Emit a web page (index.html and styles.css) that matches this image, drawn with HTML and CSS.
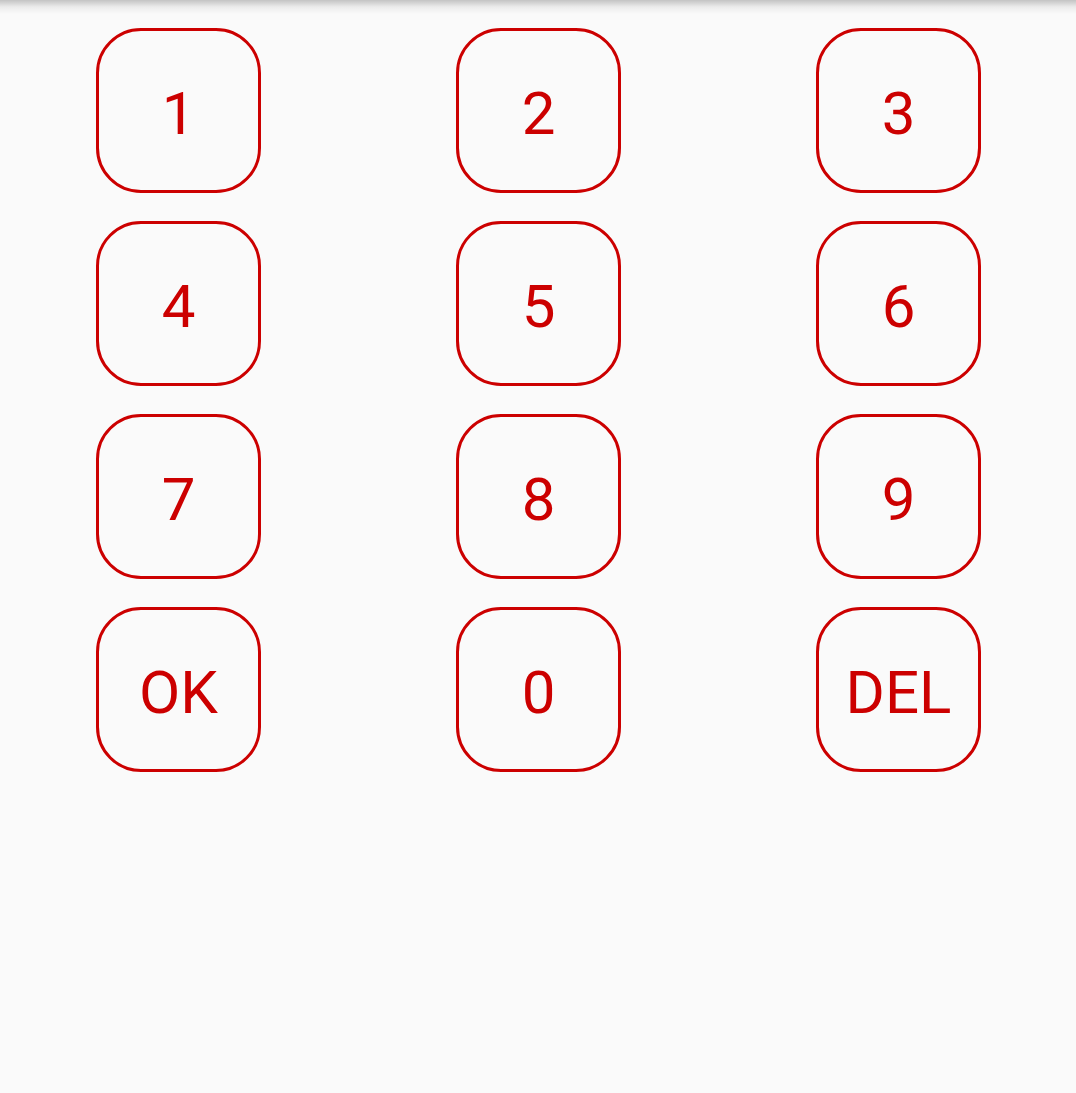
FILE: index.html
```html
<!DOCTYPE html>
<html>
<head>
<meta charset="utf-8">
<link rel="stylesheet" href="styles.css">
</head>
<body>
<div class="topshadow"></div>
<div class="pad">
  <button class="key">1</button>
  <button class="key">2</button>
  <button class="key">3</button>
  <button class="key">4</button>
  <button class="key">5</button>
  <button class="key">6</button>
  <button class="key">7</button>
  <button class="key">8</button>
  <button class="key">9</button>
  <button class="key">OK</button>
  <button class="key">0</button>
  <button class="key">DEL</button>
</div>
</body>
</html>
```
FILE: styles.css
```css
html, body {
  margin: 0;
  padding: 0;
  background: #fafafa;
  width: 1076px;
  height: 1093px;
  overflow: hidden;
  font-family: Roboto, "Liberation Sans", sans-serif;
}
.topshadow {
  height: 14px;
  margin-bottom: -14px;
  background: linear-gradient(to bottom, rgba(0,0,0,0.22), rgba(0,0,0,0.06) 50%, rgba(0,0,0,0));
  position: relative;
}
.pad {
  display: grid;
  grid-template-columns: repeat(3, 165px);
  column-gap: 195px;
  row-gap: 28px;
  padding-top: 28px;
  padding-left: 96px;
}
.key {
  width: 165px;
  height: 165px;
  box-sizing: border-box;
  border: 3px solid #cc0000;
  border-radius: 45px;
  background: transparent;
  color: #cc0000;
  font-family: Roboto, "Liberation Sans", sans-serif;
  font-size: 60px;
  padding: 6px 0 0 0;
  display: flex;
  align-items: center;
  justify-content: center;
  line-height: 1;
}
```
